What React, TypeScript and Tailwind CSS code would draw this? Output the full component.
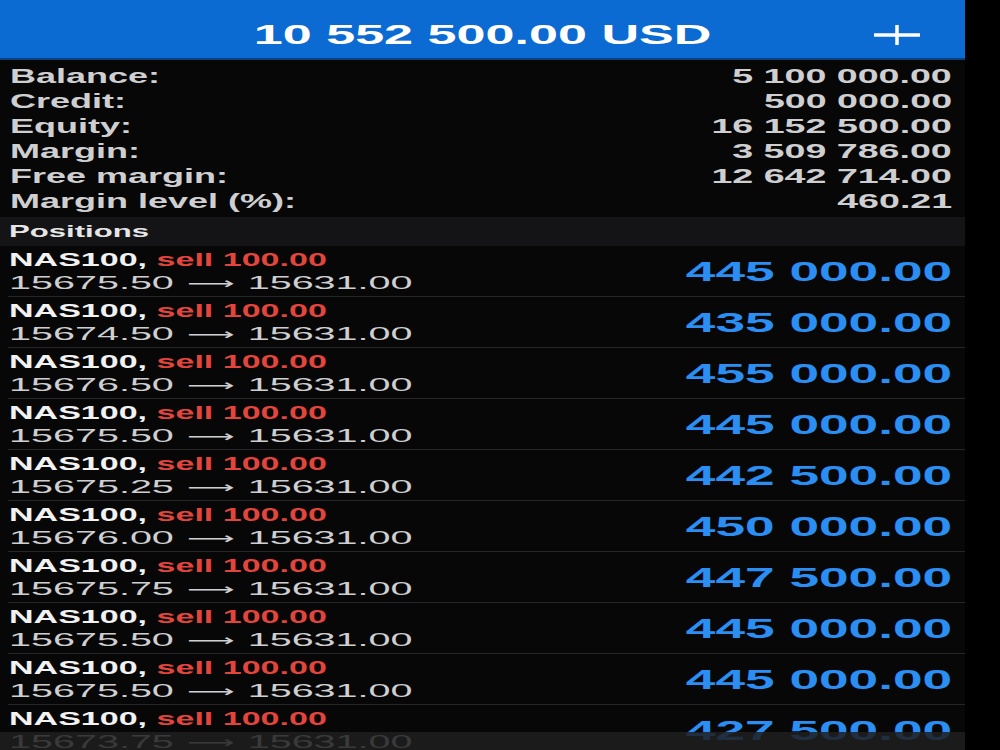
import React from "react";

type Position = {
  symbol: string;
  side: string;
  volume: string;
  openPrice: string;
  currentPrice: string;
  profit: string;
};

const summary: [string, string][] = [
  ["Balance:", "5 100 000.00"],
  ["Credit:", "500 000.00"],
  ["Equity:", "16 152 500.00"],
  ["Margin:", "3 509 786.00"],
  ["Free margin:", "12 642 714.00"],
  ["Margin level (%):", "460.21"],
];

const openPrices = [
  ["15675.50", "445 000.00"],
  ["15674.50", "435 000.00"],
  ["15676.50", "455 000.00"],
  ["15675.50", "445 000.00"],
  ["15675.25", "442 500.00"],
  ["15676.00", "450 000.00"],
  ["15675.75", "447 500.00"],
  ["15675.50", "445 000.00"],
  ["15675.50", "445 000.00"],
  ["15673.75", "427 500.00"],
];

const positions: Position[] = openPrices.map(([openPrice, profit]) => ({
  symbol: "NAS100",
  side: "sell",
  volume: "100.00",
  openPrice,
  currentPrice: "15631.00",
  profit,
}));

// the app renders with a wide horizontal stretch, so text gets scaled on x
const Wide = ({
  className,
  children,
}: {
  className: string;
  children: React.ReactNode;
}) => (
  <span className={`inline-block whitespace-nowrap ${className}`}>{children}</span>
);

const PlusIcon = () => (
  <svg width="48" height="22" viewBox="0 0 48 22" fill="none">
    <path d="M1 11h46M24 1v20" stroke="#ffffff" strokeWidth="3.5" />
  </svg>
);

const PositionRow = ({ position }: { position: Position }) => (
  <div className="ml-[8px] flex h-[51px] shrink-0 items-center justify-between border-b border-[#262628] pr-[13px]">
    <div className="flex flex-col pl-[1px]">
      <div className="h-[22px] text-[18px] font-bold leading-[22px]">
        <Wide className="origin-left scale-x-[1.89]">
          <span className="text-[#f2f2f2]">{position.symbol}, </span>
          <span className="text-[#e2453c]">
            {position.side} {position.volume}
          </span>
        </Wide>
      </div>
      <div className="h-[23px] text-[19px] leading-[23px] text-[#cfcfd1]">
        <Wide className="origin-left scale-x-[2.08]">
          {position.openPrice}{" "}
          <span className="mx-[1px] font-['DejaVu_Sans',sans-serif] text-[16px]">⟶</span>{" "}
          {position.currentPrice}
        </Wide>
      </div>
    </div>
    <div className="pt-[1px] text-[28px] font-bold leading-none text-[#2b8ef2]">
      <Wide className="origin-right scale-x-[1.9]">{position.profit}</Wide>
    </div>
  </div>
);

const App = () => {
  return (
    <div className="relative flex h-[750px] w-[1000px] overflow-hidden bg-black font-['Liberation_Sans',Arial,sans-serif]">
      <div className="flex w-[965px] flex-col bg-[#070708]">
        {/* Account header */}
        <div className="grid h-[60px] shrink-0 grid-cols-[1fr_auto_1fr] items-center border-b-2 border-[#0a3f80] bg-[#0c6bd2] pt-[12px]">
          <div />
          <div className="text-[27px] font-bold leading-none text-white">
            <Wide className="origin-center scale-x-[1.93]">10 552 500.00 USD</Wide>
          </div>
          <div className="flex justify-end pr-[44px]">
            <PlusIcon />
          </div>
        </div>

        {/* Account summary */}
        <div className="flex shrink-0 flex-col pt-[3px] pb-[4px]">
          {summary.map(([label, value]) => (
            <div
              key={label}
              className="flex h-[25px] items-center justify-between pl-[10px] pr-[13px] text-[20px] font-bold leading-none text-[#cfcfd1]"
            >
              <Wide className="origin-left scale-x-[1.8]">{label}</Wide>
              <Wide className="origin-right scale-x-[1.88]">{value}</Wide>
            </div>
          ))}
        </div>

        <div className="flex h-[29px] shrink-0 items-center bg-[#141416] pl-[9px] text-[17px] font-bold leading-none text-[#e6e6e8]">
          <Wide className="origin-left scale-x-[1.83]">Positions</Wide>
        </div>

        <div className="flex flex-col">
          {positions.map((position, i) => (
            <PositionRow key={i} position={position} />
          ))}
        </div>
      </div>

      {/* translucent tab bar edge */}
      <div className="absolute bottom-0 left-0 h-[18px] w-[965px] bg-[#1e1e20]/85" />
    </div>
  );
};

export default App;
